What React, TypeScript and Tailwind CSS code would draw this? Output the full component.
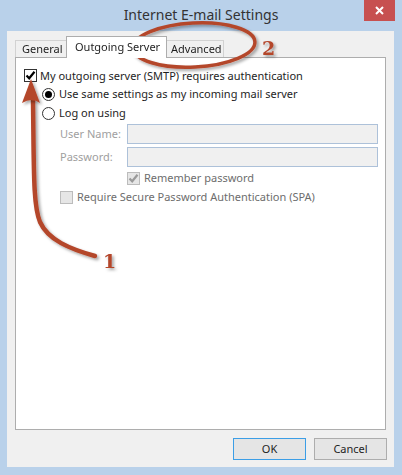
import React from "react";

const font = { fontFamily: '"Noto Sans", "Open Sans", sans-serif' };

function CheckMark({ color }: { color: string }) {
  return (
    <svg width="11" height="11" viewBox="0 0 11 11" className="block">
      <path d="M1.5 5.5 L4.2 8.3 L9.5 1.8" fill="none" stroke={color} strokeWidth="2.2" />
    </svg>
  );
}

function Checkbox({ checked, disabled }: { checked?: boolean; disabled?: boolean }) {
  return (
    <div
      className={
        disabled
          ? "w-[13px] h-[13px] border border-[#bcbcbc] bg-[#e6e6e6] flex items-center justify-center shrink-0"
          : "w-[13px] h-[13px] border border-[#333333] bg-white flex items-center justify-center shrink-0"
      }
    >
      {checked && <CheckMark color={disabled ? "#9a9a9a" : "#000"} />}
    </div>
  );
}

function Radio({ checked }: { checked?: boolean }) {
  return (
    <div className="w-[13px] h-[13px] rounded-full border border-[#333333] bg-white flex items-center justify-center shrink-0">
      {checked && <div className="w-[7px] h-[7px] rounded-full bg-black" />}
    </div>
  );
}

export default function App() {
  return (
    <div
      className="w-[402px] h-[475px] bg-[#b9d1ea] flex flex-col relative overflow-hidden text-[11px] text-[#1e1e1e] whitespace-nowrap"
      style={font}
    >
      {/* Title bar */}
      <div className="h-[31px] flex items-start shrink-0">
        <div className="w-[38px]" />
        <div className="flex-1 text-center text-[14px] leading-[20px] pt-[5px] text-[#333]">
          Internet E-mail Settings
        </div>
        <div className="w-[31px] h-[21px] bg-[#c75050] flex items-center justify-center mr-[7px]">
          <svg width="9" height="9" viewBox="0 0 9 9">
            <path d="M1 1 L8 8 M8 1 L1 8" stroke="#fff" strokeWidth="2" />
          </svg>
        </div>
      </div>

      {/* Body */}
      <div className="flex-1 ml-[7px] mr-[8px] mb-[8px] bg-[#f0f0f0] flex flex-col px-[8px] pt-[5px]">
        {/* Tabs */}
        <div className="flex items-end h-[22px] -mb-px relative z-10">
          <div className="h-[17px] w-[51px] mb-px border border-[#d2d2d2] border-r-0 border-b-0 bg-[#f0f0f0] flex items-center pl-[6px] leading-[16px]">
            General
          </div>
          <div className="h-[22px] w-[101px] border border-[#adadad] border-b-0 bg-white flex items-start pt-[2px] pl-[8px] leading-[16px]">
            Outgoing Server
          </div>
          <div className="h-[17px] w-[57px] mb-px border border-[#d2d2d2] border-l-0 border-b-0 bg-[#f0f0f0] flex items-center pl-[4px] leading-[16px]">
            Advanced
          </div>
        </div>

        {/* Content box */}
        <div className="h-[373px] border border-[#adadad] bg-white flex flex-col pl-[8px] pt-[11px]">
          <div className="flex items-center gap-[3px] h-[13px]">
            <Checkbox checked />
            <span className="leading-[15px]">My outgoing server (SMTP) requires authentication</span>
          </div>
          <div className="flex flex-col pl-[18px] mt-[4px]">
            <div className="flex items-center gap-[4px] h-[16px]">
              <Radio checked />
              <span>Use same settings as my incoming mail server</span>
            </div>
            <div className="flex items-center gap-[4px] h-[16px] mt-[3px]">
              <Radio />
              <span>Log on using</span>
            </div>
            <div className="pl-[18px] flex flex-col">
              <div className="flex items-center mt-[3px]">
                <span className="w-[67px] text-[#a0a0a0]">User Name:</span>
                <div className="w-[251px] h-[20px] border border-[#adc1d9] bg-[#f0f0f0]" />
              </div>
              <div className="flex items-center mt-[3px]">
                <span className="w-[67px] text-[#a0a0a0]">Password:</span>
                <div className="w-[251px] h-[20px] border border-[#adc1d9] bg-[#f0f0f0]" />
              </div>
              <div className="flex items-center gap-[4px] pl-[67px] mt-[5px] h-[13px]">
                <Checkbox checked disabled />
                <span className="text-[#6d6d6d]">Remember password</span>
              </div>
              <div className="flex items-center gap-[4px] mt-[6px] h-[13px]">
                <Checkbox disabled />
                <span className="text-[#6d6d6d]">Require Secure Password Authentication (SPA)</span>
              </div>
            </div>
          </div>
        </div>

        {/* Buttons */}
        <div className="flex justify-end gap-[8px] mt-[8px]">
          <button className="w-[73px] h-[22px] border border-[#3c9ee6] bg-[#e5e5e5] text-[11px] leading-[18px]">
            OK
          </button>
          <button className="w-[73px] h-[22px] border border-[#adadad] bg-[#e5e5e5] text-[11px] leading-[18px] mr-[-1px]">
            Cancel
          </button>
        </div>
      </div>

      {/* Annotations overlay */}
      <svg
        className="absolute inset-0 pointer-events-none"
        width="402"
        height="475"
        viewBox="0 0 402 475"
      >
        <defs>
          <filter id="sh" x="-20%" y="-20%" width="140%" height="140%">
            <feDropShadow dx="2" dy="2" stdDeviation="1.5" floodColor="#000" floodOpacity="0.35" />
          </filter>
        </defs>
        <g filter="url(#sh)" fill="none" stroke="#b4462c" strokeLinecap="round">
          <ellipse cx="194" cy="45" rx="61" ry="22" strokeWidth="3.5" transform="rotate(-3 194 45)" />
          <path d="M33 100 C34 170 33 205 40 222 C48 240 70 249 95 256" strokeWidth="4.5" />
        </g>
        <path d="M31 79 L40 103 Q32 97 22 103 Z" fill="#b4462c" filter="url(#sh)" />
        <text
          x="262"
          y="55"
          fontFamily="'DejaVu Serif', serif"
          fontWeight="bold"
          fontSize="19"
          fill="#b4462c"
          filter="url(#sh)"
        >
          2
        </text>
        <text
          x="103"
          y="268"
          fontFamily="'DejaVu Serif', serif"
          fontWeight="bold"
          fontSize="19"
          fill="#b4462c"
          filter="url(#sh)"
        >
          1
        </text>
      </svg>
    </div>
  );
}
